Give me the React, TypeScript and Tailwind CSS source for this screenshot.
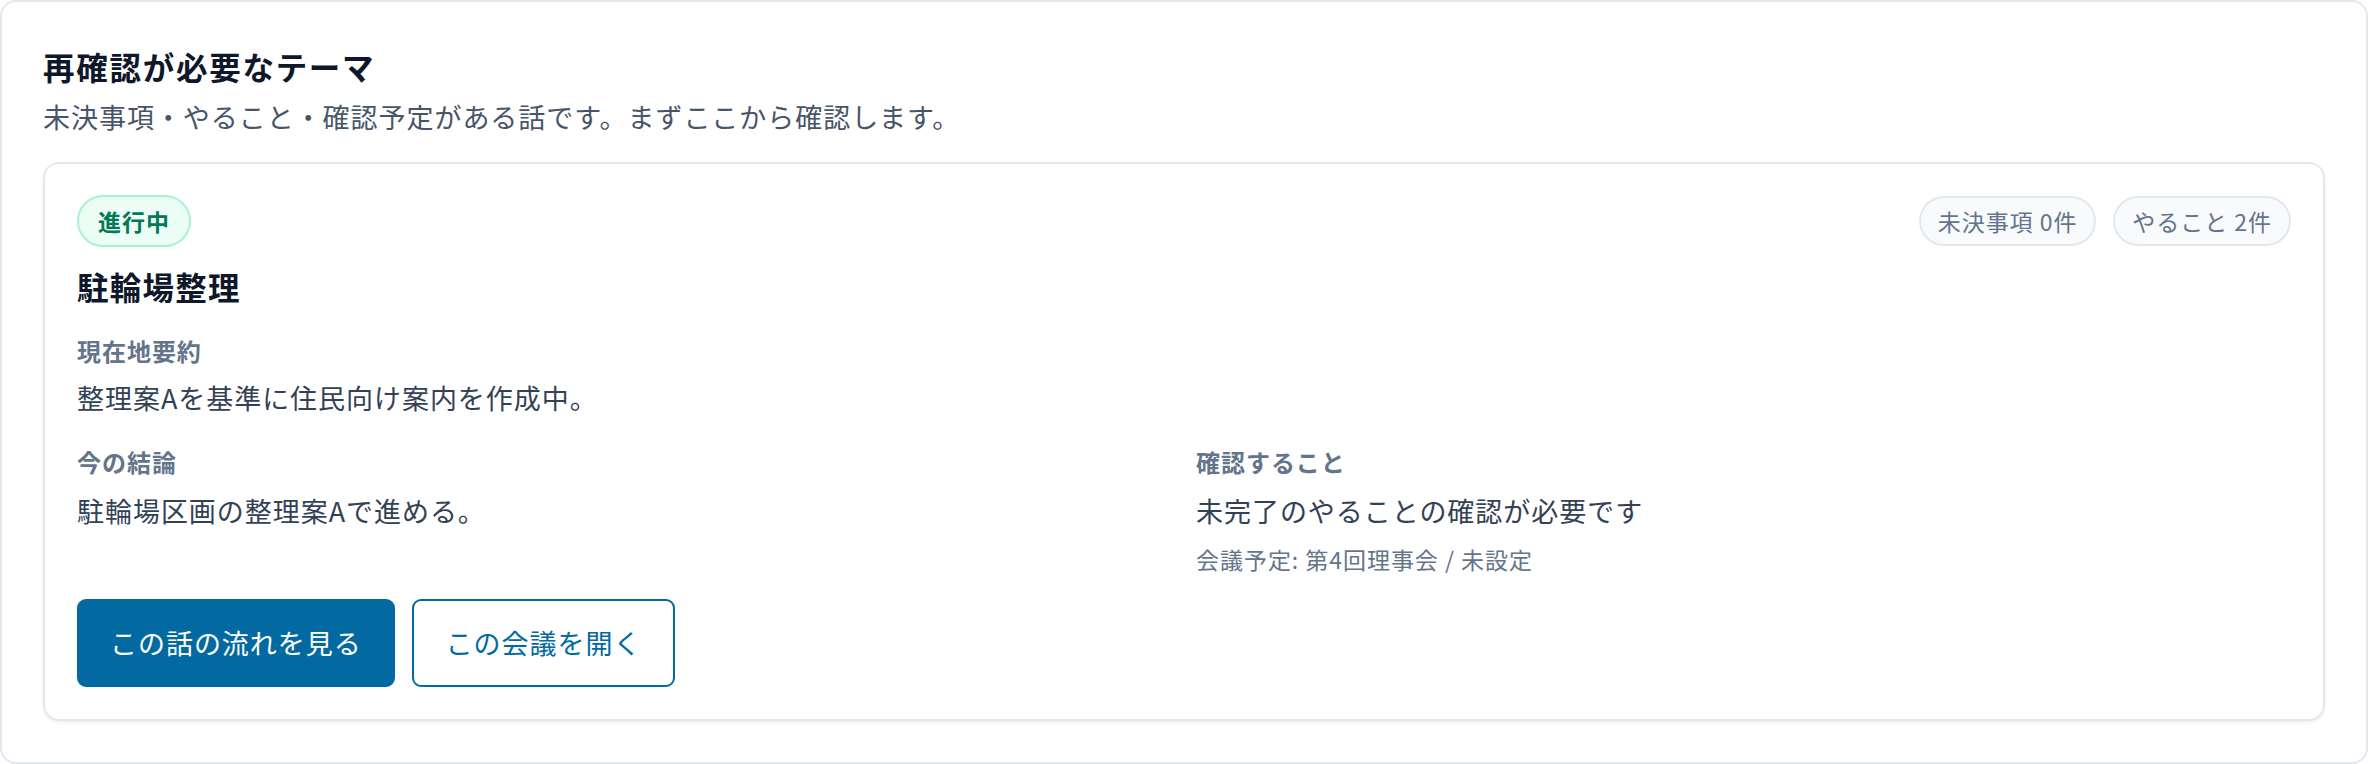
import React from "react";

const font = { fontFamily: '"Noto Sans CJK JP", "Noto Sans", sans-serif' };

export default function App() {
  return (
    <div className="w-[2368px] h-[764px] bg-white tracking-[0.06em]" style={font}>
      <section className="h-[764px] rounded-[16px] border-2 border-[#e3e8ef] bg-white px-[41px] pt-[42px]">
        <h2 className="text-[31.5px] font-bold leading-[45px] tracking-[0.055em] text-[#0f172a]">再確認が必要なテーマ</h2>
        <p className="mt-[8px] text-[27px] leading-[40px] text-[#475569]">
          未決事項・やること・確認予定がある話です。まずここから確認します。
        </p>
        <div className="mt-[25px] rounded-[16px] border-2 border-[#e3e8ef] bg-white px-[32px] pt-[31px] pb-[32px] shadow-[0_2px_3px_rgba(15,23,42,0.06)]">
          <div className="flex items-start justify-between">
            <span className="rounded-full border-2 border-[#a7f3d0] bg-[#ecfdf5] px-[19px] py-[7px] text-[23px] font-bold leading-[34px] text-[#047857]">
              進行中
            </span>
            <div className="flex gap-[17px] pt-[1px]">
              <span className="rounded-full border-2 border-[#e3e8ef] bg-[#f8fafc] px-[17px] py-[6px] text-[23px] leading-[34px] text-[#64748b]">
                未決事項 0件
              </span>
              <span className="rounded-full border-2 border-[#e3e8ef] bg-[#f8fafc] px-[17px] py-[6px] text-[23px] leading-[34px] text-[#64748b]">
                やること 2件
              </span>
            </div>
          </div>
          <h3 className="mt-[17px] text-[31.5px] font-bold leading-[45px] tracking-[0.04em] text-[#0f172a]">駐輪場整理</h3>
          <div className="mt-[24px] text-[24px] font-bold leading-[36px] tracking-[0.04em] text-[#64748b]">現在地要約</div>
          <p className="mt-[9px] text-[27px] leading-[40px] text-[#334155]">整理案Aを基準に住民向け案内を作成中。</p>
          <div className="mt-[26px] grid grid-cols-2 gap-[24px]">
            <div>
              <div className="text-[24px] font-bold leading-[36px] tracking-[0.04em] text-[#64748b]">今の結論</div>
              <p className="mt-[11px] text-[27px] leading-[40px] text-[#334155]">駐輪場区画の整理案Aで進める。</p>
            </div>
            <div>
              <div className="text-[24px] font-bold leading-[36px] tracking-[0.04em] text-[#64748b]">確認すること</div>
              <p className="mt-[11px] text-[27px] leading-[40px] text-[#334155]">未完了のやることの確認が必要です</p>
              <p className="mt-[11px] text-[23px] leading-[34px] text-[#64748b]">会議予定: 第4回理事会 / 未設定</p>
            </div>
          </div>
          <div className="mt-[23px] flex gap-[17px]">
            <button className="rounded-[9px] border-2 border-[#0369a1] bg-[#0369a1] px-[31px] py-[22px] text-[27px] leading-[40px] text-white">
              この話の流れを見る
            </button>
            <button className="rounded-[9px] border-2 border-[#0369a1] bg-white px-[32px] py-[22px] text-[27px] leading-[40px] text-[#0369a1]">
              この会議を開く
            </button>
          </div>
        </div>
      </section>
    </div>
  );
}
